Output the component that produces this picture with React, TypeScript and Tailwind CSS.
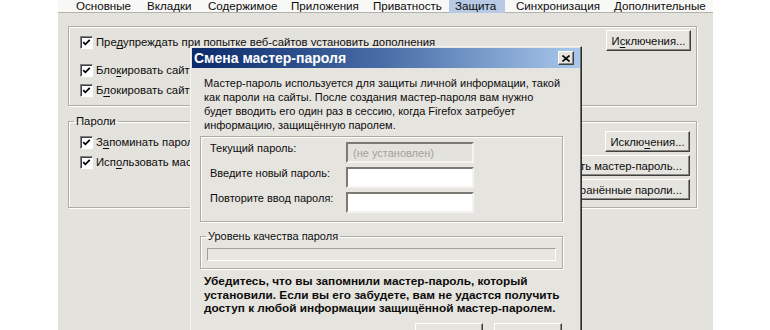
import React from 'react';

// classic windows look: raised buttons, sunken fields, etched group boxes
const raised =
  'border border-t-white border-l-white border-r-[#404040] border-b-[#404040] shadow-[inset_-1px_-1px_0_#8a8883] bg-[#e6e4df]';
const sunken =
  'border-2 border-t-[#7c7a75] border-l-[#7c7a75] border-r-[#f4f3ef] border-b-[#f4f3ef]';
const etched = 'border border-[#aeaba3] shadow-[inset_1px_1px_0_#fff,1px_1px_0_#fff]';

function Key({ text, k }: { text: string; k: number }) {
  return (
    <>
      {text.slice(0, k)}
      <span className="underline underline-offset-2">{text[k]}</span>
      {text.slice(k + 1)}
    </>
  );
}

function Check({ children }: { children: React.ReactNode }) {
  return (
    <div className="flex h-[14px] items-center gap-[3px] whitespace-nowrap">
      <span className="flex h-[13px] w-[13px] shrink-0 items-center justify-center border border-t-[#808080] border-l-[#808080] border-b-white border-r-white bg-white shadow-[inset_1px_1px_0_#404040]">
        <svg width="9" height="9" viewBox="0 0 9 9">
          <path d="M1.2 4.2 L3.4 6.4 L7.8 1.8" stroke="#000" strokeWidth="1.7" fill="none" />
        </svg>
      </span>
      <span>{children}</span>
    </div>
  );
}

function Btn({ children, className = '' }: { children: React.ReactNode; className?: string }) {
  return (
    <div className={`flex h-[21px] items-center justify-center whitespace-nowrap px-[7px] ${raised} ${className}`}>
      {children}
    </div>
  );
}

const tabs = [
  { t: 'Основные', w: 'w-[71px]' },
  { t: 'Вкладки', w: 'w-[61px]' },
  { t: 'Содержимое', w: 'w-[83px]' },
  { t: 'Приложения', w: 'w-[82px]' },
  { t: 'Приватность', w: 'w-[82px]' },
  { t: 'Защита', w: 'w-[56px]', on: true },
  { t: 'Синхронизация', w: 'w-[98px] ml-[5px]' },
  { t: 'Дополнительные', w: 'w-[102px]' },
];

export default function App() {
  return (
    <div className="relative h-[330px] w-[770px] overflow-hidden bg-white font-['Liberation_Sans',sans-serif] text-[11px] leading-[14px] text-[#0c0c0c]">
      {/* main preferences window */}
      <div className="ml-[58px] flex h-full w-[655px] flex-col bg-[#e4e2dc] text-[11.3px]">
        {/* tabs row, mostly scrolled away */}
        <div className="flex h-[13px] shrink-0 border-b border-[#b4b2ac] bg-[#f8f8f6] pl-[12px] text-[11.6px] leading-[12px]">
          {tabs.map((tab) => (
            <div key={tab.t} className={`h-[13px] -mb-px pl-[6px] ${tab.w} ${tab.on ? 'bg-[#b7c9e4]' : ''}`}>
              {tab.t}
            </div>
          ))}
        </div>

        {/* add-ons / attack sites */}
        <div className={`ml-[10px] mt-[13px] flex h-[80px] w-[629px] justify-between ${etched}`}>
          <div className="pl-[11px] pt-[8px]">
            <Check>
              <Key text="Предупреждать при попытке веб-сайтов установить дополнения" k={3} />
            </Check>
            <div className="mt-[14px]">
              <Check>
                <Key text="Блокировать сайты, подозреваемые в атаках" k={3} />
              </Check>
            </div>
            <div className="mt-[6px]">
              <Check>
                <Key text="Блокировать сайты, подозреваемые в мошенничестве" k={1} />
              </Check>
            </div>
          </div>
          <Btn className="mr-[5px] mt-[3px] w-[85px]">
            <Key text="Исключения..." k={1} />
          </Btn>
        </div>

        {/* passwords */}
        <fieldset className={`ml-[10px] mt-[8px] flex h-[94px] w-[629px] justify-between ${etched}`}>
          <legend className="ml-[5px] px-[2px]">Пароли</legend>
          <div className="flex w-full justify-between">
            <div className="pl-[11px] pt-[7px]">
              <Check>
                <Key text="Запоминать пароли для сайтов" k={1} />
              </Check>
              <div className="mt-[6px]">
                <Check>
                  <Key text="Использовать мастер-пароль" k={3} />
                </Check>
              </div>
            </div>
            <div className="mr-[6px] mt-[3px] flex flex-col items-end gap-[3px]">
              <Btn className="w-[85px]">
                <Key text="Исключения..." k={5} />
              </Btn>
              <Btn>Сменить мастер-пароль...</Btn>
              <Btn>
                <Key text="Сохранённые пароли..." k={2} />
              </Btn>
            </div>
          </div>
        </fieldset>
      </div>

      {/* change master password dialog */}
      <div className="absolute left-[190px] top-[46px] h-[300px] w-[392px] border border-t-[#f4f3ef] border-l-[#f4f3ef] border-r-[#303030] border-b-[#303030] bg-[#e6e4df] shadow-[inset_-1px_0_0_#6e6c68]">
        <div className="mx-px mt-px flex h-[20px] items-center justify-between bg-gradient-to-r from-[#0c2a6c] via-[#4a6fa8] to-[#a9c8ec] pl-[2px] pr-[6px]">
          <span className="text-[14px] font-bold leading-[16px] text-white">Смена мастер-пароля</span>
          <div className={`flex h-[14px] w-[16px] items-center justify-center ${raised}`}>
            <svg width="8" height="7" viewBox="0 0 8 7">
              <path d="M0.5 0.5 L7.5 6.5 M7.5 0.5 L0.5 6.5" stroke="#000" strokeWidth="1.6" />
            </svg>
          </div>
        </div>

        <p className="ml-[13px] mt-[8px] whitespace-nowrap">
          Мастер-пароль используется для защиты личной информации, такой
          <br />
          как пароли на сайты. После создания мастер-пароля вам нужно
          <br />
          будет вводить его один раз в сессию, когда Firefox затребует
          <br />
          информацию, защищённую паролем.
        </p>

        <div className={`ml-[9px] mt-[4px] flex h-[86px] w-[363px] flex-col gap-[4px] pl-[9px] pt-[5px] ${etched}`}>
          {[
            { l: 'Текущий пароль:', v: '(не установлен)', off: true },
            { l: 'Введите новый пароль:', v: '' },
            { l: 'Повторите ввод пароля:', v: '' },
          ].map((r) => (
            <div key={r.l} className="flex items-start">
              <span className="-mt-px w-[136px]">{r.l}</span>
              <div
                className={`flex h-[21px] w-[128px] items-center pl-[5px] ${sunken} ${
                  r.off ? 'bg-[#e4e2dc] text-[#a3a19b]' : 'bg-white'
                }`}
              >
                {r.v}
              </div>
            </div>
          ))}
        </div>

        <fieldset className={`ml-[9px] mt-[7px] h-[40px] w-[363px] ${etched}`}>
          <legend className="ml-[5px] px-[2px]">Уровень качества пароля</legend>
          <div className="ml-[6px] mt-[5px] h-[13px] w-[349px] border border-t-[#a19f99] border-l-[#a19f99] border-r-white border-b-white bg-[#e8e6e1]" />
        </fieldset>

        <p className="ml-[13px] mt-[6px] whitespace-nowrap text-[11.8px] font-bold leading-[13.5px]">
          Убедитесь, что вы запомнили мастер-пароль, который
          <br />
          установили. Если вы его забудете, вам не удастся получить
          <br />
          доступ к любой информации защищённой мастер-паролем.
        </p>

        <div className="mt-[7px] flex justify-end gap-[11px] pr-[19px]">
          <Btn className="h-[23px] w-[68px]">OK</Btn>
          <Btn className="h-[23px] w-[68px]">Отмена</Btn>
        </div>
      </div>
    </div>
  );
}
